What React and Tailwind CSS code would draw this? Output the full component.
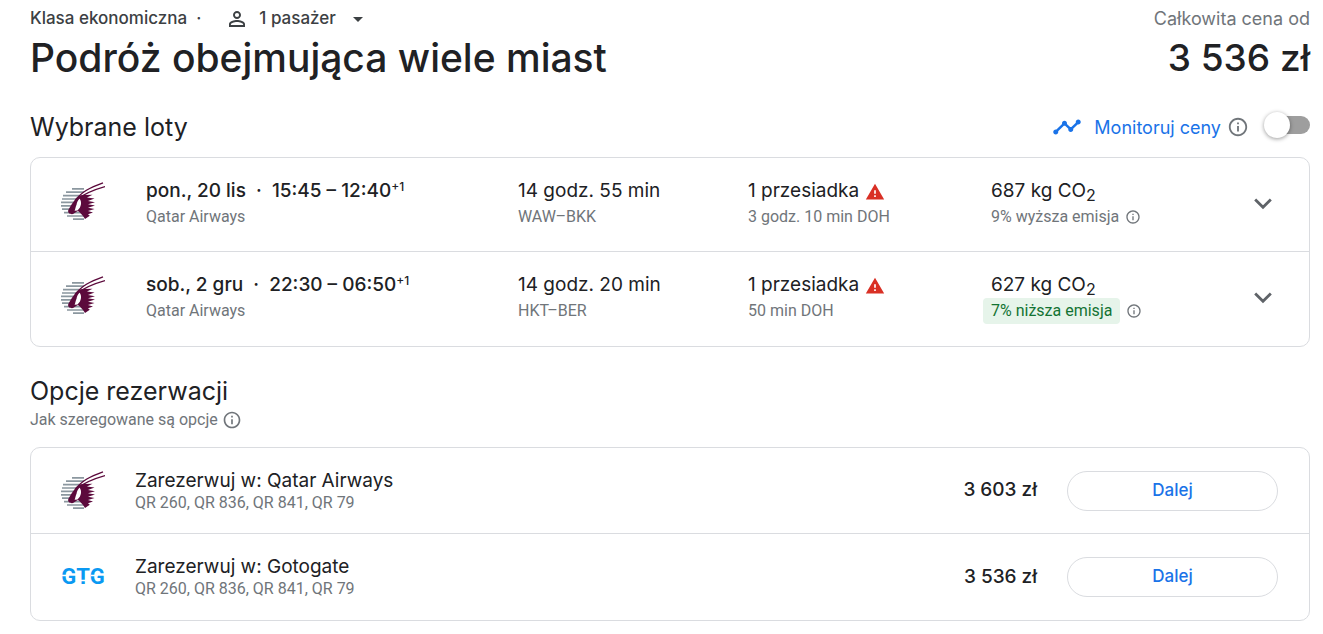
import React, { useState } from 'react';

const flights = [
  {
    id: 1,
    date: 'pon., 20 lis',
    hours: '15:45 – 12:40',
    airline: 'Qatar Airways',
    duration: '14 godz. 55 min',
    route: 'WAW–BKK',
    layover: '3 godz. 10 min DOH',
    co2: '687 kg CO',
    emission: '9% wyższa emisja',
    lower: false,
  },
  {
    id: 2,
    date: 'sob., 2 gru',
    hours: '22:30 – 06:50',
    airline: 'Qatar Airways',
    duration: '14 godz. 20 min',
    route: 'HKT–BER',
    layover: '50 min DOH',
    co2: '627 kg CO',
    emission: '7% niższa emisja',
    lower: true,
  },
];

const offers = [
  { id: 'qatar', name: 'Qatar Airways', codes: 'QR 260, QR 836, QR 841, QR 79', price: '3 603 zł', Logo: QatarLogo },
  { id: 'gtg', name: 'Gotogate', codes: 'QR 260, QR 836, QR 841, QR 79', price: '3 536 zł', Logo: GotogateLogo },
];

function QatarLogo() {
  return (
    <svg viewBox="0 0 44 40" className="w-11 h-10" aria-hidden="true">
      <path
        stroke="#8b979f"
        strokeWidth="1.7"
        d="M11 6.8h12M5 10.2h18M2 13.6h16M1 17h14M0 20.4h13M0 23.8h11M1 27.2h9M3 30.6h18M6 34h18M12 37.2h11"
      />
      <path
        fill="#5c0a3c"
        d="M7.3 28C9 25 11 21.5 13.2 18.8C15.5 14.5 19 12.6 24 13L31.5 12.8L26 15.6L33.5 16.6L27 18.9L34 20.2L27 22.3L34 23.6L27 25.7L33.5 27L27 29L32 30.4L27 32.2L28.8 33.8L24 37C22 33.5 19.5 31 17 29C15 29.5 13 32 11 32.2C8.5 32.2 6.5 30.5 7.3 28Z"
      />
      <path fill="#fff" d="M18.6 16.5C21 20 20.5 25 16.5 28.5L13.6 28.8C14.6 26.5 14.2 25.5 15.6 22.5C15.8 20.5 16.8 18.5 18.6 16.5Z" />
      <path fill="none" stroke="#5c0a3c" strokeWidth="1.4" d="M14.5 18.5C20 10 29 5.5 42 .8M17 16.8C24 11.5 32 8 44 4.6" />
    </svg>
  );
}

function GotogateLogo() {
  return (
    <svg viewBox="0 0 44 32" className="w-11 h-8" role="img" aria-label="Gotogate">
      <text x="22" y="23" textAnchor="middle" fill="#0a99f2" className="font-['Roboto',sans-serif] text-[22px] font-bold">GTG</text>
      <path stroke="#fff" strokeWidth="1.5" d="M0 14.5h8M15 19.5h14M30 14.5h7" />
    </svg>
  );
}

function InfoIcon({ className }) {
  return (
    <svg viewBox="0 0 24 24" fill="#70757a" className={className}>
      <path d="M11 7h2v2h-2V7zm0 4h2v6h-2v-6zm1-9C6.48 2 2 6.48 2 12s4.48 10 10 10 10-4.48 10-10S17.52 2 12 2zm0 18c-4.41 0-8-3.59-8-8s3.59-8 8-8 8 3.59 8 8-3.59 8-8 8z" />
    </svg>
  );
}

function WarningIcon() {
  return (
    <svg viewBox="0 0 24 24" fill="#d93025" className="size-5 mt-0.5" aria-hidden="true">
      <path d="M1 21h22L12 2 1 21zm12-3h-2v-2h2v2zm0-4h-2v-4h2v4z" />
    </svg>
  );
}

function SmallText({ children }) {
  return <p className="font-['Roboto',sans-serif] text-base leading-[26px] text-[#70757a]">{children}</p>;
}

function FlightRow({ flight }) {
  const [open, setOpen] = useState(false);

  return (
    <li className="grid grid-cols-[85px_minmax(0,372fr)_minmax(0,230fr)_minmax(0,243fr)_minmax(0,260fr)_24px] min-h-[94px] pl-[30px] pr-[34px] py-5 text-[19px] leading-[26px]">
      <div className="pt-1"><QatarLogo /></div>
      <div>
        <p className="font-medium">
          {flight.date}&nbsp; · &nbsp;{flight.hours}<sup className="text-xs">+1</sup>
        </p>
        <SmallText>{flight.airline}</SmallText>
      </div>
      <div>
        <p>{flight.duration}</p>
        <SmallText>{flight.route}</SmallText>
      </div>
      <div>
        <p className="flex items-center gap-1.5">1 przesiadka <WarningIcon /></p>
        <SmallText>{flight.layover}</SmallText>
      </div>
      <div>
        <p>{flight.co2}<sub className="text-base">2</sub></p>
        <div className="flex items-center gap-1.5 font-['Roboto',sans-serif] text-base leading-[26px]">
          {flight.lower
            ? <span className="-ml-2 px-2 rounded bg-[#e6f4ea] text-[#137333]">{flight.emission}</span>
            : <span className="text-[#70757a]">{flight.emission}</span>}
          <button aria-label="Informacje o emisji"><InfoIcon className="size-4" /></button>
        </div>
      </div>
      <button className="flex justify-center items-center h-[50px]" aria-label="Szczegóły lotu" aria-expanded={open} onClick={() => setOpen(!open)}>
        <svg viewBox="0 0 24 24" fill="none" stroke="#5f6368" strokeWidth="2.4" className="size-7 shrink-0">
          <path d="M5.3 9l6.7 6.7L18.700 9" />
        </svg>
      </button>
    </li>
  );
}

function OfferRow({ offer }) {
  const { name, codes, price, Logo } = offer;

  return (
    <li className="flex items-center min-h-[86px] pl-[30px] pr-[31px]">
      <div className="w-[74px]"><Logo /></div>
      <div className="flex-1">
        <p className="text-[19px] leading-6">Zarezerwuj w: {name}</p>
        <p className="font-['Roboto',sans-serif] text-base leading-5 text-[#70757a]">{codes}</p>
      </div>
      <p className="mr-[30px] text-[19px] font-medium">{price}</p>
      <button className="w-[211px] h-10 rounded-full border border-[#dadce0] text-[17px] font-medium text-[#1a73e8]">Dalej</button>
    </li>
  );
}

export default function App() {
  const [tracking, setTracking] = useState(false);

  return (
    <main className="bg-white pl-[30px] pr-[13px] pt-1.5 pb-3 font-['Inter','Noto_Sans',sans-serif] text-[#202124]">
      <header className="flex justify-between">
        <div>
          <div className="flex items-center h-[26px] text-[17px] font-medium text-[#3c4043]">
            <span>Klasa ekonomiczna&nbsp; ·</span>
            <button className="flex items-center ml-6">
              <svg viewBox="0 0 24 24" fill="#3c4043" className="size-6 mr-2.5" aria-hidden="true">
                <path d="M12 5.9a2.1 2.1 0 1 1 0 4.2 2.1 2.1 0 0 1 0-4.2m0 9c2.97 0 6.1 1.46 6.1 2.1v1.1H5.9V17c0-.64 3.13-2.1 6.1-2.1M12 4C9.79 4 8 5.79 8 8s1.79 4 4 4 4-1.79 4-4-1.79-4-4-4zm0 9c-2.67 0-8 1.34-8 4v3h16v-3c0-2.66-5.33-4-8-4z" />
              </svg>
              1 pasażer
              <svg viewBox="0 0 24 24" fill="#3c4043" className="size-6 ml-2.5" aria-hidden="true"><path d="M7 10l5 5 5-5z" /></svg>
            </button>
          </div>
          <h1 className="text-[39px] leading-[52px] font-medium">Podróż obejmująca wiele miast</h1>
        </div>
        <div className="text-right">
          <p className="text-[18px] leading-[26px] text-[#70757a]">Całkowita cena od</p>
          <p className="text-[37px] leading-[52px] font-medium">3 536 zł</p>
        </div>
      </header>

      <section className="mt-[27px]">
        <div className="flex items-center justify-between mb-3.5">
          <h2 className="text-[25px] leading-8">Wybrane loty</h2>
          <div className="flex items-center">
            <svg viewBox="0 0 24 24" fill="#1a73e8" className="size-[30px] mr-3" aria-hidden="true">
              <path d="M23 8c0 1.1-.9 2-2 2-.18 0-.35-.02-.51-.07l-3.56 3.55c.05.16.07.34.07.52 0 1.1-.9 2-2 2s-2-.9-2-2c0-.18.02-.36.07-.52l-2.55-2.55c-.16.05-.34.07-.52.07s-.36-.02-.52-.07l-4.55 4.56c.05.16.07.33.07.51 0 1.1-.9 2-2 2s-2-.9-2-2 .9-2 2-2c.18 0 .35.02.51.07l4.56-4.55C8.02 9.36 8 9.18 8 9c0-1.1.9-2 2-2s2 .9 2 2c0 .18-.02.36-.07.52l2.55 2.55c.16-.05.34-.07.52-.07s.36.02.52.07l3.55-3.56C19.02 8.35 19 8.18 19 8c0-1.1.9-2 2-2s2 .9 2 2z" />
            </svg>
            <label htmlFor="track" className="text-[18px] text-[#1a73e8]">Monitoruj ceny</label>
            <button className="ml-1.5" aria-label="Informacje o monitorowaniu"><InfoIcon className="size-[22px]" /></button>
            <input
              id="track"
              type="checkbox"
              checked={tracking}
              onChange={() => setTracking(!tracking)}
              className="relative ml-[23px] mb-1 h-[18px] w-[38px] appearance-none rounded-full bg-[#9e9e9e] checked:bg-[#8ab4f8] before:absolute before:-left-2 before:-top-1 before:size-[26px] before:rounded-full before:bg-white before:shadow-[0_1px_4px_rgba(0,0,0,0.4)] checked:before:left-5"
            />
          </div>
        </div>
        <ul className="border border-[#dadce0] rounded-[10px] divide-y divide-[#dadce0]">
          {flights.map(f => <FlightRow key={f.id} flight={f} />)}
        </ul>
      </section>

      <section className="mt-7">
        <h2 className="text-[25px] leading-8">Opcje rezerwacji</h2>
        <div className="flex items-center gap-1 mb-3.5">
          <SmallText>Jak szeregowane są opcje</SmallText>
          <button aria-label="Informacje o kolejności opcji"><InfoIcon className="size-5" /></button>
        </div>
        <ul className="border border-[#dadce0] rounded-[10px] divide-y divide-[#dadce0]">
          {offers.map(o => <OfferRow key={o.id} offer={o} />)}
        </ul>
      </section>
    </main>
  );
}
